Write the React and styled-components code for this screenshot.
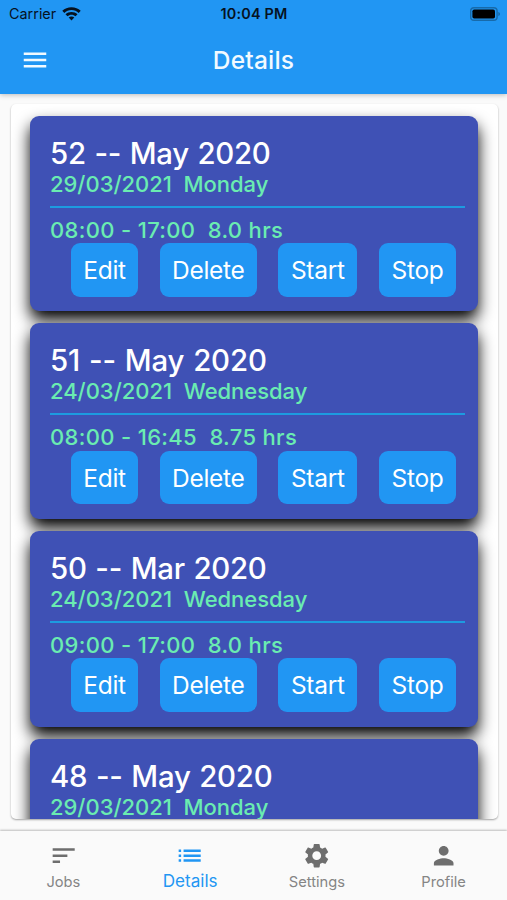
import React from "react";
import styled, { createGlobalStyle } from "styled-components";
import { MdMenu, MdSort, MdList, MdSettings, MdPerson } from "react-icons/md";

const jobs = [
    { id: 52, month: "May 2020", date: "29/03/2021", day: "Monday", time: "08:00 - 17:00", hours: "8.0 hrs", spacing: -0.28 },
    { id: 51, month: "May 2020", date: "24/03/2021", day: "Wednesday", time: "08:00 - 16:45", hours: "8.75 hrs", spacing: -0.12 },
    { id: 50, month: "Mar 2020", date: "24/03/2021", day: "Wednesday", time: "09:00 - 17:00", hours: "8.0 hrs", spacing: -0.26 },
    { id: 48, month: "May 2020", date: "29/03/2021", day: "Monday", time: "08:00 - 17:00", hours: "8.0 hrs", spacing: -0.25 },
];

const actions = [
    { label: "Edit", width: 67.5 },
    { label: "Delete", width: 97 },
    { label: "Start", width: 79 },
    { label: "Stop", width: 77.5 },
];

const tabs = [
    { label: "Jobs", Icon: MdSort },
    { label: "Details", Icon: MdList, active: true },
    { label: "Settings", Icon: MdSettings },
    { label: "Profile", Icon: MdPerson },
];

const JobCard = ({ job }) => (
    <Card>
        <CardTitle $spacing={job.spacing}>
            {job.id} -- {job.month}
        </CardTitle>
        <CardText $spacing={-0.03}>{`${job.date}  ${job.day}`}</CardText>
        <Divider />
        <CardText $spacing={0.33}>{`${job.time}  ${job.hours}`}</CardText>
        <ButtonRow>
            {actions.map(({ label, width }) => (
                <ActionButton key={label} $width={width}>
                    {label}
                </ActionButton>
            ))}
        </ButtonRow>
    </Card>
);

const App = () => {
    return (
        <Screen>
            <GlobalStyle />
            <Header>
                <StatusBar>
                    <Carrier>
                        Carrier
                        <WifiIcon />
                    </Carrier>
                    <Clock>10:04 PM</Clock>
                    <BatteryIcon />
                </StatusBar>
                <AppBar>
                    <MenuButton aria-label="menu">
                        <MdMenu />
                    </MenuButton>
                    <AppTitle>Details</AppTitle>
                </AppBar>
            </Header>
            <Content>
                <Panel>
                    {jobs.map((job) => (
                        <JobCard key={job.id} job={job} />
                    ))}
                </Panel>
            </Content>
            <TabBar>
                {tabs.map(({ label, Icon, active }) => (
                    <Tab key={label} $active={active}>
                        <Icon />
                        <TabLabel $active={active}>{label}</TabLabel>
                    </Tab>
                ))}
            </TabBar>
        </Screen>
    );
};

export default App;

const WifiIcon = () => (
    <svg width="19" height="14" viewBox="0 0 19 14" fill="#06121f">
        <path d="M9.5 0.2C5.9 0.2 2.7 1.6 0.3 3.8L2.3 5.9C4.2 4.2 6.7 3.1 9.5 3.1s5.3 1.1 7.2 2.8l2-2.1C16.3 1.6 13.1 0.2 9.5 0.2z" />
        <path d="M9.5 4.9C7.2 4.9 5.1 5.8 3.5 7.2L5.5 9.2C6.6 8.3 8 7.7 9.5 7.7s2.9.6 4 1.5l2-2C13.9 5.8 11.8 4.9 9.5 4.9z" />
        <path d="M9.5 9.4c-1.1 0-2.1.4-2.8 1.1l2.8 2.9 2.8-2.9C11.6 9.8 10.6 9.4 9.5 9.4z" />
    </svg>
);

const BatteryIcon = () => (
    <svg width="31" height="14" viewBox="0 0 31 14">
        <rect x="0.7" y="0.7" width="26.4" height="12.6" rx="3.4" fill="none" stroke="#176aaa" strokeWidth="1.4" />
        <rect x="2.4" y="2.4" width="22.6" height="9.2" rx="1.8" fill="#000" />
        <path d="M28.3 5v4c1-.4 1.7-1.1 1.7-2s-.7-1.6-1.7-2z" fill="#176aaa" />
    </svg>
);

const GlobalStyle = createGlobalStyle`
    body {
        margin: 0;
        background: #fafafa;
    }
    * {
        box-sizing: border-box;
    }
`;

const Screen = styled.div`
    display: flex;
    flex-direction: column;
    width: 507px;
    height: 900px;
    overflow: hidden;
    background: #fafafa;
    font-family: Inter, "Liberation Sans", sans-serif;
`;

const Header = styled.header`
    flex: 0 0 94px;
    background: #2196f3;
    box-shadow: 0 1px 5px rgba(0, 0, 0, 0.25);
`;

const StatusBar = styled.div`
    display: grid;
    grid-template-columns: 1fr auto 1fr;
    align-items: center;
    height: 27px;
    padding: 0 6px 0 9px;
    color: #06121f;

    > svg {
        justify-self: end;
    }
`;

const Carrier = styled.div`
    display: flex;
    align-items: center;
    gap: 6px;
    font-size: 14.4px;
    letter-spacing: 0;
`;

const Clock = styled.div`
    margin-right: 2px;
    font-size: 14.4px;
    font-weight: 600;
    letter-spacing: 0.2px;
`;

const AppBar = styled.div`
    display: grid;
    grid-template-columns: 70px 1fr 70px;
    align-items: center;
    height: 66px;
    color: #f2faff;
`;

const MenuButton = styled.button`
    display: flex;
    justify-content: center;
    padding: 0;
    border: 0;
    background: none;
    color: inherit;
    font-size: 30px;
`;

const AppTitle = styled.h1`
    margin: 0;
    text-align: center;
    font-size: 24.5px;
    font-weight: 500;
    letter-spacing: 0.2px;
`;

const Content = styled.main`
    flex: 1;
    min-height: 0;
    padding: 10px 9.5px 12px 11px;
`;

const Panel = styled.section`
    display: flex;
    flex-direction: column;
    gap: 12.2px;
    height: 714.5px;
    padding: 11.7px 20px 0 19px;
    overflow: hidden;
    border-radius: 5px;
    background: #fff;
    box-shadow: 0 1px 2px rgba(0, 0, 0, 0.35);
`;

const Card = styled.article`
    flex: 0 0 195.5px;
    padding: 21px 12.5px 0 20px;
    border-radius: 9px;
    background: #3f51b5;
    box-shadow: 0 9px 16px rgba(0, 0, 0, 1);
`;

const CardTitle = styled.h2`
    margin: 0;
    color: #fff;
    font-size: 29.4px;
    font-weight: 500;
    line-height: 34px;
    letter-spacing: ${({ $spacing }) => $spacing}px;
    word-spacing: 1.1px;
`;

const CardText = styled.p`
    margin: 0;
    color: #6aecb1;
    font-size: 22px;
    font-weight: 500;
    line-height: 27px;
    letter-spacing: ${({ $spacing }) => $spacing}px;
    white-space: pre;
`;

const Divider = styled.hr`
    height: 2px;
    margin: 8px 0 9px;
    border: 0;
    background: #1d9be0;
`;

const ButtonRow = styled.div`
    display: flex;
    justify-content: flex-end;
    gap: 21.5px;
    margin-top: -0.7px;
    padding-right: 8.7px;
`;

const ActionButton = styled.button`
    width: ${({ $width }) => $width}px;
    height: 53.5px;
    padding: 0.5px 0 0;
    border: 0;
    border-radius: 9px;
    background: #2196f3;
    color: #fff;
    font-family: inherit;
    font-size: 24.5px;
    letter-spacing: -0.3px;
    white-space: nowrap;
`;

const TabBar = styled.nav`
    display: grid;
    grid-template-columns: repeat(4, 1fr);
    flex: 0 0 69px;
    background: #fafafa;
    box-shadow: 0 -1px 2px rgba(0, 0, 0, 0.25);
`;

const Tab = styled.div`
    display: flex;
    flex-direction: column;
    align-items: center;
    padding-top: 10px;
    color: ${({ $active }) => ($active ? "#2196f3" : "#6e6e6e")};
    font-size: 29.4px;
`;

const TabLabel = styled.span`
    margin-top: ${({ $active }) => ($active ? 0.5 : 1.5)}px;
    color: ${({ $active }) => ($active ? "#2196f3" : "#858585")};
    font-size: ${({ $active }) => ($active ? 17.1 : 14.7)}px;
    line-height: 20px;
`;
